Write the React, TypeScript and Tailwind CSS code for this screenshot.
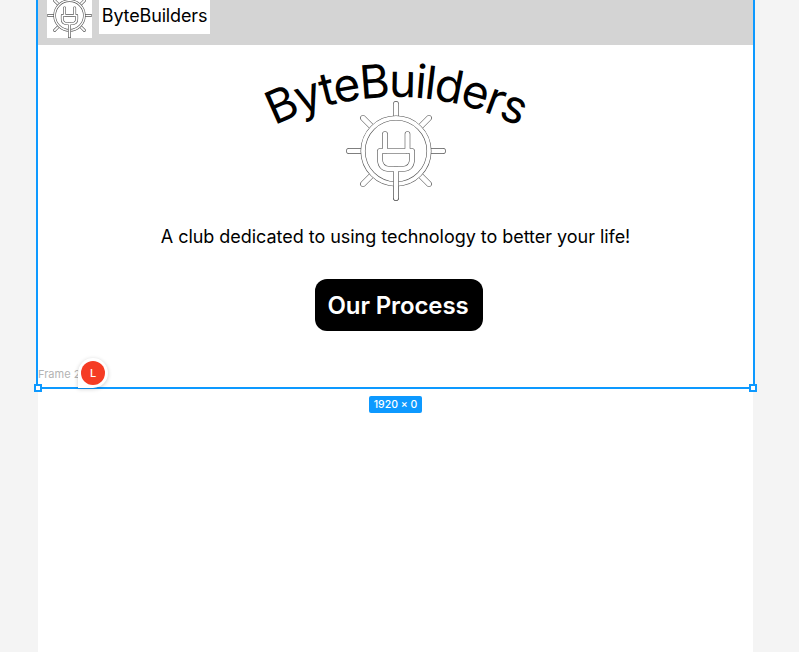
const INTER = "font-['Inter',sans-serif]";

function PlugParts({ stroke, sw }: { stroke: string; sw: number }) {
  return (
    <g fill="none" stroke={stroke} strokeWidth={sw} strokeLinecap="round" strokeLinejoin="round">
      <path d="M50 3V16M50 84V97M3 50H16M84 50H97M17 17L26 26M83 17L74 26M17 83L26 74M83 83L74 74" />
    </g>
  );
}

function PlugFront({ stroke, sw }: { stroke: string; sw: number }) {
  return (
    <g fill="none" stroke={stroke} strokeWidth={sw} strokeLinecap="round" strokeLinejoin="round">
      <path d="M39 33V50M61.5 33V50M50 68V97" />
      <path d="M34 50H66V58Q66 68 56 68H44Q34 68 34 58Z" />
    </g>
  );
}

function PlugIcon({ x = 0, y = 0, size = 100 }: { x?: number; y?: number; size?: number }) {
  const k = 100 / size;
  const line = 0.6 * k;
  return (
    <svg x={x} y={y} width={size} height={size} viewBox="0 0 100 100" className="block shrink-0">
      <PlugParts stroke="#555555" sw={5.2 + line} />
      <PlugParts stroke="#ffffff" sw={5.2 - line} />
      <circle cx="50" cy="50" r="33" fill="none" stroke="#555555" strokeWidth={4.4 + line} />
      <circle cx="50" cy="50" r="33" fill="none" stroke="#ffffff" strokeWidth={4.4 - line} />
      <PlugFront stroke="#555555" sw={5 + line} />
      <PlugFront stroke="#ffffff" sw={5 - line} />
    </svg>
  );
}

function HeroLogo() {
  return (
    <svg width="290" height="160" viewBox="0 0 290 160" className="block overflow-visible">
      <defs>
        <path id="logo-arc" d="M-28.6 110.2 A270 270 0 0 1 318.6 110.2" />
      </defs>
      <text fontFamily="Inter, sans-serif" fontSize="46" letterSpacing="-1.85" fill="#000000">
        <textPath href="#logo-arc" startOffset="50%" textAnchor="middle">
          ByteBuilders
        </textPath>
      </text>
      <PlugIcon x={95} y={51} size={100} />
    </svg>
  );
}

export default function App() {
  return (
    <div className={`h-screen w-full overflow-hidden bg-[#f4f4f4] pl-[38px] ${INTER}`}>
      <div className="h-full w-[715px] bg-white">
        {/* selected frame */}
        <div className="relative -mx-[2px] flex h-[389px] flex-col border-x-2 border-b-2 border-[#0d99ff]">
          <header className="flex h-[45px] shrink-0 items-end gap-[7px] overflow-hidden bg-[#d4d4d4] pb-[7px] pl-[9px]">
            <div className="bg-white">
              <PlugIcon size={45} />
            </div>
            <div className="mb-[4px] flex h-[40px] w-[111px] items-end justify-center bg-white pb-[6px] text-[18px] leading-[24px] tracking-[-0.15px] text-black">
              ByteBuilders
            </div>
          </header>

          <main className="flex flex-col items-center">
            <div className="mt-[5px]">
              <HeroLogo />
            </div>
            <p className="mt-[16px] text-[18px] leading-[22px] tracking-[-0.035px] text-black">
              A club dedicated to using technology to better your life!
            </p>
            <button className="ml-[7px] mt-[31px] flex h-[52px] w-[168px] items-center justify-center rounded-[12px] bg-black pr-[2px] pt-[1px] text-[24px] font-semibold tracking-[-0.12px] text-white">
              Our Process
            </button>
          </main>

          {/* canvas overlays */}
          <span className="absolute left-0 top-[367px] text-[11px] leading-[14px] text-[#b3b3b3]">Frame 2</span>
          <div className="absolute left-[40px] top-[358px] flex h-[30px] w-[30px] items-center justify-center rounded-full rounded-bl-none bg-white shadow-[0_1px_4px_rgba(0,0,0,0.2)]">
            <div className="flex h-[24px] w-[24px] items-center justify-center rounded-full bg-[#f53c24] text-[11px] font-medium text-white">
              L
            </div>
          </div>
          <div className="absolute -bottom-[5px] -left-[4px] h-[8px] w-[8px] border-2 border-[#0d99ff] bg-white" />
          <div className="absolute -bottom-[5px] -right-[4px] h-[8px] w-[8px] border-2 border-[#0d99ff] bg-white" />
          <div className="absolute -bottom-[26px] left-[331px] flex h-[17px] w-[53px] items-center justify-center rounded-[2px] bg-[#0d99ff] text-[10.5px] font-medium text-white">
            1920 × 0
          </div>
        </div>
      </div>
    </div>
  );
}
